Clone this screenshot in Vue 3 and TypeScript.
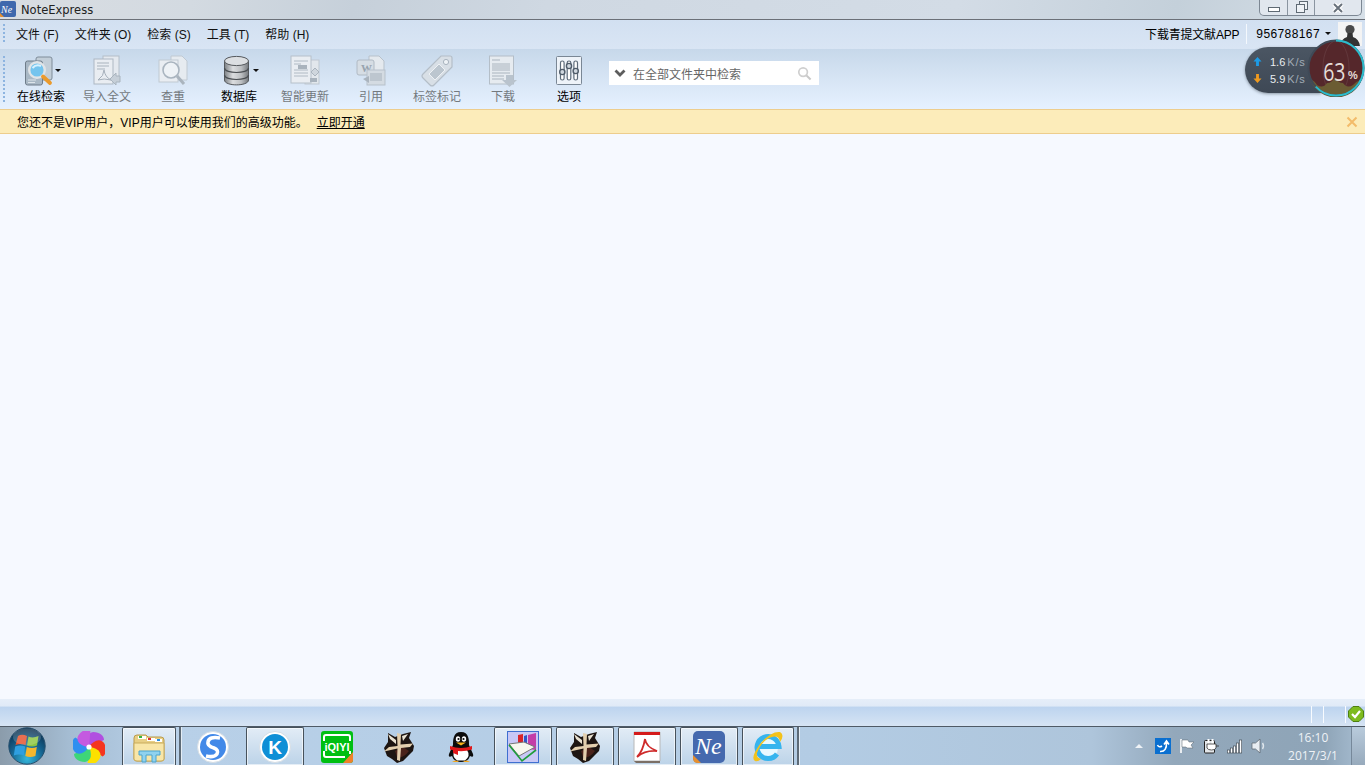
<script setup lang="ts">
const menus = ["文件 (F)", "文件夹 (O)", "检索 (S)", "工具 (T)", "帮助 (H)"]

const tools = [
  { id: "search", label: "在线检索", on: true, caret: true },
  { id: "import", label: "导入全文", on: false, caret: false },
  { id: "dup", label: "查重", on: false, caret: false },
  { id: "db", label: "数据库", on: true, caret: true },
  { id: "update", label: "智能更新", on: false, caret: false },
  { id: "cite", label: "引用", on: false, caret: false },
  { id: "tag", label: "标签标记", on: false, caret: false },
  { id: "down", label: "下载", on: false, caret: false },
  { id: "opts", label: "选项", on: true, caret: false },
]

const tasks = [
  { id: "sogou", active: false },
  { id: "k", active: true },
  { id: "iqiyi", active: false },
  { id: "game", active: false },
  { id: "qq", active: false },
  { id: "book", active: true },
  { id: "game", active: true },
  { id: "pdf", active: true },
  { id: "ne", active: true },
  { id: "ie", active: true },
]

const petals = ["#b14fe0", "#f5351f", "#fde000", "#3ed678", "#2f8ff0", "#c45ae0"]
</script>

<template>
  <div class="app">
    <header class="titlebar">
      <svg class="app-logo" viewBox="0 0 16 16" width="16" height="16">
        <rect width="16" height="16" rx="2" fill="#3f68ad" />
        <path d="M0 12 L4 16 H1 Q0 16 0 15Z" fill="#e8902e" />
        <text x="1" y="12" class="ne-small">Ne</text>
      </svg>
      <span class="app-name">NoteExpress</span>
      <div class="win-btns">
        <span class="win-btn min"><i></i></span>
        <span class="win-btn restore"><b></b><i></i></span>
        <span class="win-btn close">
          <svg viewBox="0 0 14 10" width="14" height="10">
            <path d="M3 1 L11 9 M11 1 L3 9" stroke="#fff" stroke-width="4.4" />
            <path d="M3 1 L11 9 M11 1 L3 9" stroke="#68717b" stroke-width="2" />
          </svg>
        </span>
      </div>
    </header>

    <nav class="menubar">
      <span class="grip"></span>
      <span v-for="m in menus" :key="m" class="menu">{{ m }}</span>
      <div class="account">
        <span class="app-link">下载青提文献APP</span>
        <span class="acc-sep"></span>
        <span class="acc-id">956788167</span>
        <span class="caret small"></span>
        <svg class="avatar" viewBox="0 0 24 24" width="24" height="24">
          <rect width="24" height="24" fill="#f4f4f4" />
          <circle cx="12" cy="7.5" r="4.6" fill="#4a4a4a" />
          <path d="M9.5 11 L14.5 11 L15 15 Q21 17 22 24 H2 Q3 17 9 15Z" fill="#333" />
        </svg>
      </div>
    </nav>

    <section class="toolbar">
      <span class="grip tall"></span>
      <div v-for="t in tools" :key="t.id" class="tool" :class="{ off: !t.on }">
        <div class="tool-icon">
          <svg v-if="t.id === 'search'" viewBox="0 0 32 32" width="32" height="32">
            <rect x="11" y="2" width="16" height="23" rx="2" fill="#c2ced8" stroke="#7e8c99" />
            <rect x="0.5" y="6" width="17" height="24" rx="2" fill="#a9b8c5" stroke="#6f7d8a" />
            <path d="M3 25 H11 M3 27.5 H10" stroke="#dde4ea" />
            <circle cx="12" cy="15" r="7.800" fill="#74c4ee" stroke="#e0e4e7" stroke-width="2.400" />
            <path d="M7.500 13 Q11 9 16 11" stroke="#d6f1ff" stroke-width="2" fill="none" />
            <path d="M18 21.500 L25 28" stroke="#ea9a2c" stroke-width="3.800" stroke-linecap="round" />
          </svg>
          <svg v-else-if="t.id === 'import'" viewBox="0 0 32 32" width="32" height="32">
            <rect x="12" y="1" width="16" height="22" fill="#e4e9ef" stroke="#b4bec8" />
            <rect x="3" y="4" width="19" height="25" fill="#e9edf2" stroke="#adb8c3" />
            <path d="M6 8 H18 M6 11 H18 M6 14 H14" stroke="#a9b3bd" />
            <path d="M7 25 Q13 21 13 15 Q14 22 20 25 Q13 23 7 25Z" fill="none" stroke="#a5afba" />
            <path d="M19 24 L25 18 V21 H29 V27 H25 V30Z" fill="#c6cfd8" stroke="#a9b4be" />
          </svg>
          <svg v-else-if="t.id === 'dup'" viewBox="0 0 32 32" width="32" height="32">
            <path d="M14 1 H25 L30 6 V25 H14Z" fill="#e6ebf0" stroke="#c0c9d2" />
            <rect x="2" y="5" width="19" height="22" fill="#e9edf2" stroke="#c0c9d2" />
            <circle cx="14" cy="15" r="8" fill="#eef2f6" stroke="#a9b4bf" stroke-width="1.600" />
            <path d="M20 21 L27 29" stroke="#aab4be" stroke-width="3" />
          </svg>
          <svg v-else-if="t.id === 'db'" viewBox="0 0 32 32" width="32" height="32">
            <defs>
              <linearGradient id="dbg" x1="0" x2="1" y1="0" y2="0">
                <stop offset="0" stop-color="#7d8185" />
                <stop offset=".35" stop-color="#dcdee0" />
                <stop offset=".7" stop-color="#bcbfc2" />
                <stop offset="1" stop-color="#74787c" />
              </linearGradient>
            </defs>
            <path d="M1.500 6 V25 C1.500 31.500 25.500 31.500 25.500 25 V6Z" fill="url(#dbg)" stroke="#55595d" />
            <ellipse cx="13.500" cy="6" rx="12" ry="4.600" fill="#dcdfe2" stroke="#55595d" />
            <path d="M1.500 13 C1.500 19 25.500 19 25.500 13 M1.500 20 C1.500 26 25.500 26 25.500 20" fill="none" stroke="#4a4e52" stroke-width="1.200" />
          </svg>
          <svg v-else-if="t.id === 'update'" viewBox="0 0 32 32" width="32" height="32">
            <rect x="16" y="5" width="14" height="24" fill="#e2e7ec" stroke="#bfc8d1" />
            <rect x="2" y="1" width="20" height="27" fill="#e9edf2" stroke="#b6c0ca" />
            <path d="M5 6 H19 M5 9 H12 M5 15 H19 M5 18 H19 M5 21 H19" stroke="#b0bac4" />
            <rect x="9" y="10" width="9" height="4" fill="#a9b3bd" />
            <rect x="21" y="23" width="7" height="4" fill="#a9b3bd" />
            <path d="M26 13 L30 17 L26 21 L22 17Z" fill="#cfd6dd" stroke="#aab4be" />
          </svg>
          <svg v-else-if="t.id === 'cite'" viewBox="0 0 32 32" width="32" height="32">
            <path d="M14 1 H24 L29 6 V20 H14Z" fill="#e4e9ee" stroke="#b7c1cb" />
            <rect x="2" y="5" width="17" height="15" rx="2" fill="#d6dde4" stroke="#b0bac4" />
            <text x="6" y="17" class="w-letter">W</text>
            <rect x="12" y="15" width="18" height="15" fill="#d4dbe2" stroke="#b7c1cb" />
            <rect x="15" y="18" width="12" height="8" fill="#bdc6cf" />
            <path d="M14 21 L8 24 L14 28Z" fill="#aab4be" />
          </svg>
          <svg v-else-if="t.id === 'tag'" viewBox="0 0 32 32" width="32" height="32">
            <path d="M20 1 H29 Q31 1 31 3 V12 L13 30 Q11 32 9 30 L2 23 Q0 21 2 19Z" fill="#d8dfe6" stroke="#b4bec8" stroke-width="1.200" />
            <circle cx="25" cy="7" r="2.600" fill="#eef2f6" stroke="#a9b4bf" />
            <path d="M18 9 L24 15 L14 25 L8 19Z" fill="#bcc6cf" stroke="#eef1f4" />
          </svg>
          <svg v-else-if="t.id === 'down'" viewBox="0 0 32 32" width="32" height="32">
            <rect x="2.500" y="1" width="24" height="28" fill="#e6ebf0" stroke="#b4bec8" />
            <path d="M5 5 H13 M5 9 H23 M5 11 H23 M5 13 H23 M5 15 H23 M5 18 H23 M5 21 H17 M5 24 H17" stroke="#aab4be" />
            <path d="M19 20 H26 V25 H30 L22.500 32 L15 25 H19Z" fill="#b9c3cd" />
          </svg>
          <svg v-else viewBox="0 0 32 32" width="32" height="32">
            <rect x="3.500" y="1.500" width="25" height="28" rx="1" fill="#eef3f9" stroke="#7a8795" />
            <g fill="#fff" stroke="#5d6b7a" stroke-width="1.200">
              <rect x="7.500" y="6" width="3.600" height="19" rx="1.800" />
              <rect x="14.200" y="6" width="3.600" height="19" rx="1.800" />
              <rect x="20.900" y="6" width="3.600" height="19" rx="1.800" />
            </g>
            <g fill="#cfd7df" stroke="#4f5c6a" stroke-width="1.400">
              <circle cx="9.300" cy="17" r="2.600" />
              <circle cx="16" cy="11" r="2.600" />
              <circle cx="22.700" cy="16" r="2.600" />
            </g>
          </svg>
          <span v-if="t.caret" class="caret"></span>
        </div>
        <span class="tool-label">{{ t.label }}</span>
      </div>

      <div class="searchbox">
        <svg viewBox="0 0 12 8" width="12" height="8">
          <path d="M1.500 1.500 L6 6 L10.500 1.500" fill="none" stroke="#5d5d5d" stroke-width="2.800" />
        </svg>
        <span class="search-text">在全部文件夹中检索</span>
        <svg class="search-glass" viewBox="0 0 16 16" width="15" height="15">
          <circle cx="6.500" cy="6.500" r="4.600" fill="none" stroke="#cfcfcf" stroke-width="1.800" />
          <path d="M10 10 L14.500 14.500" stroke="#c8c8c8" stroke-width="2.200" />
        </svg>
      </div>

      <div class="speed">
        <div class="speed-rows">
          <div class="speed-row">
            <svg viewBox="0 0 10 10" width="9" height="9"><path d="M5 0 L9.500 5 H6.600 V10 H3.400 V5 H.5Z" fill="#1d9be6" /></svg>
            <span class="val">1.6</span><span class="unit">K/s</span>
          </div>
          <div class="speed-row">
            <svg viewBox="0 0 10 10" width="9" height="9"><path d="M5 10 L9.500 5 H6.600 V0 H3.400 V5 H.5Z" fill="#ef9a1f" /></svg>
            <span class="val">5.9</span><span class="unit">K/s</span>
          </div>
        </div>
        <div class="gauge">
          <svg class="gauge-bg" viewBox="0 0 58 58" width="58" height="58">
            <circle cx="29" cy="29" r="27.500" fill="#55272b" />
            <ellipse cx="29" cy="29" rx="13" ry="27" fill="none" stroke="#fff" stroke-opacity=".08" />
            <path d="M3 40 Q8 42 10 46 Q16 50 20 44 Q25 44 28 38 Q31 44 36 44 Q40 50 46 46 Q50 42 55 40 A27.500 27.500 0 0 1 3 40Z" fill="#6b5c33" />
            <circle cx="29" cy="29" r="27.500" fill="none" stroke="#3f4a57" stroke-width="2" />
            <circle cx="29" cy="29" r="27.500" fill="none" stroke="#2cbccc" stroke-width="2" stroke-dasharray="109 173" transform="rotate(-90 29 29)" />
          </svg>
          <span class="gauge-num">63</span>
          <span class="gauge-pct">%</span>
        </div>
      </div>
    </section>

    <div class="notice">
      <span>您还不是VIP用户，VIP用户可以使用我们的高级功能。</span>
      <a class="notice-link">立即开通</a>
      <svg class="notice-close" viewBox="0 0 12 12" width="12" height="12">
        <path d="M1.500 1.500 L10.500 10.500 M10.500 1.500 L1.500 10.500" stroke="#f3bb6a" stroke-width="2" />
      </svg>
    </div>

    <main class="content"></main>

    <div class="statusbar">
      <span class="st-sep first"></span>
      <span class="st-sep mid"></span>
      <span class="st-sep last"></span>
      <svg viewBox="0 0 16 16" width="16" height="16">
        <path d="M5 .5 H11 L15.500 5 V11 L11 15.500 H5 L.5 11 V5Z" fill="#7dbb1f" stroke="#4e7f10" />
        <path d="M4 8 L7 11 L12 5" fill="none" stroke="#fff" stroke-width="2.200" />
      </svg>
    </div>

    <footer class="taskbar">
      <div class="start">
        <svg viewBox="0 0 38 38" width="38" height="38">
          <defs>
            <radialGradient id="orb" cx=".5" cy=".85" r=".85">
              <stop offset="0" stop-color="#35b7dc" />
              <stop offset=".55" stop-color="#14608c" />
              <stop offset="1" stop-color="#0c2c48" />
            </radialGradient>
          </defs>
          <circle cx="19" cy="19" r="18.200" fill="url(#orb)" stroke="#27506e" />
          <path d="M10 9 Q14 6.500 19 9 L17.500 18 Q13 16 7.500 18Z" fill="#e5502a" />
          <path d="M20.500 9.500 Q25 11.500 30.500 9 L29 18.500 Q24 20.500 19 18.500Z" fill="#8cc63f" />
          <path d="M7.200 19.500 Q12.500 17.500 17.200 19.500 L15.800 28.500 Q11 26.500 5.800 28.500Z" fill="#2f9fe0" />
          <path d="M18.800 20 Q24 22 28.800 20 L27.400 29 Q22 31 17.300 29Z" fill="#f6b62c" />
          <ellipse cx="19" cy="10" rx="14" ry="8.500" fill="#fff" fill-opacity=".18" />
        </svg>
      </div>
      <div class="task first-pin">
        <svg viewBox="0 0 32 32" width="32" height="32">
          <path
            v-for="(c, i) in petals"
            :key="c"
            d="M16 16 C13 10 13 2 20 1 C27 1 31 5 31 9 Z"
            :fill="c"
            :transform="`rotate(${i * 60} 16 16)`"
          />
          <circle cx="16" cy="16" r="2.600" fill="#fff" />
        </svg>
      </div>
      <div class="task narrow active">
        <svg viewBox="0 0 32 32" width="32" height="32">
          <path d="M1 7 Q1 4 4 4 H13 L15 6 H28 Q31 6 31 9 V28 Q31 30 28 30 H4 Q1 30 1 28Z" fill="#e8cf85" stroke="#b99b4e" />
          <rect x="5" y="5" width="8" height="3" fill="#fff" />
          <rect x="6" y="5" width="3" height="2" fill="#34b33f" />
          <rect x="14" y="7" width="8" height="3" fill="#fff" />
          <rect x="15" y="7" width="3" height="2" fill="#d33" />
          <rect x="22" y="8" width="7" height="3" fill="#fff" />
          <rect x="24" y="8" width="3" height="2" fill="#2a8fe0" />
          <path d="M1 12 H31 V28 Q31 30 28 30 H4 Q1 30 1 28Z" fill="#f8e6a8" stroke="#c8ab5c" />
          <path d="M6 20 H27 V24 H23 V31 H19 V24 H13 V31 H9 V24 H6Z" fill="#8fd2ee" stroke="#4aa3cc" />
        </svg>
      </div>
      <span class="task-sep"></span>
      <div v-for="(t, i) in tasks" :key="i" class="task" :class="[{ active: t.active }, t.id]">
        <svg v-if="t.id === 'sogou'" viewBox="0 0 32 32" width="32" height="32">
          <circle cx="16" cy="16" r="15.500" fill="#fff" stroke="#d5dde4" />
          <circle cx="16" cy="16" r="13" fill="#4289e8" />
          <path d="M23 7 Q12 5 11 11 Q10 15 17 17 Q22 19 20 23 Q17 27 9 25" fill="none" stroke="#fff" stroke-width="3.600" />
        </svg>
        <svg v-else-if="t.id === 'k'" viewBox="0 0 32 32" width="32" height="32">
          <circle cx="16" cy="16" r="15.500" fill="#fff" stroke="#d5dde4" />
          <circle cx="16" cy="16" r="13" fill="#0f8fd6" />
          <text x="16" y="22.500" text-anchor="middle" class="k-letter">K</text>
        </svg>
        <svg v-else-if="t.id === 'iqiyi'" viewBox="0 0 32 32" width="32" height="32">
          <rect width="32" height="32" rx="3" fill="#00bf12" />
          <path d="M32 21 V29 Q32 32 29 32 H22Z" fill="#f0812a" />
          <path d="M3 10 V6 Q3 4 5 4 H27 Q29 4 29 6 V10 M3 20 V24 Q3 26 5 26 H24 M29 20 V23" fill="none" stroke="#fff" stroke-width="2" />
          <text x="16" y="20" text-anchor="middle" class="iq-letter">iQIYI</text>
        </svg>
        <svg v-else-if="t.id === 'game'" viewBox="0 0 32 32" width="32" height="32">
          <path d="M5 2 L12 6 L20 3 L28 1 L26 7 L31 15 L30 20 L26 24 L20 30 L14 32 L9 28 L4 25 L1 17 L5 11Z" fill="#1d1512" />
          <path d="M14 26 Q20 28 26 20 L20 16 L12 20Z" fill="#4a231b" />
          <path d="M14 2 L18 3 L17.500 13.500 L30 12.500 L27 16 L18 17 L17 30 L14 29 L14.500 17.500 L1 20.500 L6 16 L14.500 15Z" fill="#e3cfae" />
          <path d="M5 3 L13 9 L13 13 L7 8Z M19 5 L25 3 L20 10Z" fill="#e9e2d2" />
        </svg>
        <svg v-else-if="t.id === 'qq'" viewBox="0 0 32 32" width="32" height="32">
          <path d="M16 1 C8 1 8 9 8 14 L4 23 Q3 27 7 25 Q9 31 16 31 Q23 31 25 25 Q29 27 28 23 L24 14 C24 9 24 1 16 1Z" fill="#0c0c0c" />
          <path d="M10 19 Q16 16 22 19 Q26 25 20 29.500 H12 Q6 25 10 19Z" fill="#fff" />
          <ellipse cx="13" cy="8" rx="2.200" ry="2.800" fill="#fff" />
          <ellipse cx="19" cy="8" rx="2.200" ry="2.800" fill="#fff" />
          <circle cx="13.500" cy="8" r="1.100" fill="#111" />
          <circle cx="18.500" cy="8" r="1.100" fill="#111" />
          <path d="M11 11.500 H21 L16 14.500Z" fill="#f6b21b" />
          <path d="M5 15 Q16 19 27 15 V18.500 Q16 22 5 18.500Z" fill="#e0181b" />
          <path d="M8 18 H13 V24 L8 22Z" fill="#e0181b" />
          <path d="M7 31 Q11 28 14 31Z M18 31 Q21 28 25 31Z" fill="#f6a81b" />
        </svg>
        <svg v-else-if="t.id === 'book'" viewBox="0 0 32 32" width="32" height="32">
          <rect x=".5" y=".5" width="31" height="31" fill="#c8c8f6" stroke="#3f6fd0" />
          <path d="M11 4 L16 3 V16 H11Z" fill="#d8242a" />
          <path d="M17 5 L20 4 V16 H17Z" fill="#2f55c8" />
          <path d="M21 4 L29 2 V19 L21 18Z" fill="#c33ea8" />
          <path d="M2 13 L12 25 L28 16 L17 11Z" fill="#f7f7ee" stroke="#777" />
          <path d="M2 14 L15 30 L29 19" fill="none" stroke="#1e9c3a" stroke-width="1.600" />
        </svg>
        <svg v-else-if="t.id === 'pdf'" viewBox="0 0 32 32" width="32" height="32">
          <path d="M3 1 H29 V30 H3Z" fill="#fff" stroke="#b8b8b8" />
          <rect x="3" y="1" width="26" height="3" fill="#d41a1a" />
          <path d="M6 26 Q12 20 14 8 Q15 16 26 20 Q14 19 6 26Z" fill="none" stroke="#cf2b2b" stroke-width="1.800" />
          <path d="M3 30 H29 V32 H5Z" fill="#7b6f66" />
        </svg>
        <svg v-else-if="t.id === 'ne'" viewBox="0 0 32 32" width="32" height="32">
          <rect width="32" height="32" rx="5" fill="#4569ae" />
          <path d="M0 24 L8 32 H5 Q0 32 0 27Z" fill="#e8902e" />
          <text x="2" y="23" class="ne-big">Ne</text>
        </svg>
        <svg v-else viewBox="0 0 32 32" width="32" height="32">
          <circle cx="16" cy="17" r="10" fill="#e8f8ff" />
          <path d="M25 23 A11 11 0 1 1 27 15.500 H7" fill="none" stroke="#36b4ee" stroke-width="5" />
          <path d="M3 30 Q-2 27 8 13 Q19 0 28 1 Q33 4 28 11 Q27 4 20 6 Q10 9 5 22 Q4 27 9 28 Q6 31 3 30Z" fill="#f3c21b" />
        </svg>
      </div>
      <span class="task-sep"></span>

      <div class="tray">
        <span class="tray-arrow"></span>
        <svg viewBox="0 0 16 16" width="16" height="16">
          <rect width="16" height="16" fill="#0a6fd0" />
          <path d="M2.500 7 Q4 10 7 8 M5 13.500 Q12 14 11.500 4 M9 6.500 L11.500 3 L14 6.500" fill="none" stroke="#fff" stroke-width="1.600" />
        </svg>
        <svg viewBox="0 0 16 16" width="16" height="16">
          <path d="M2 1 V15" stroke="#fff" stroke-width="1.600" />
          <path d="M3 2 H9 L10 4 H15 L12 7 L14 10 H8 L7 9 H3Z" fill="#fff" stroke="#55606a" stroke-width=".5" />
        </svg>
        <svg viewBox="0 0 16 16" width="16" height="16">
          <rect x="1.500" y="2.500" width="10" height="12.500" rx="1" fill="#e3e6e9" stroke="#222" />
          <path d="M5.500 6 V1 M9.500 6 V1" stroke="#fff" stroke-width="2" />
          <path d="M4 6 H13 V10 Q12 12 8.500 12 Q5 12 4 10Z M13 8 H16" fill="#fff" stroke="#333" stroke-width=".8" />
        </svg>
        <svg viewBox="0 0 16 16" width="16" height="16">
          <g fill="#fff" stroke="#3b444c" stroke-width=".6">
            <rect x=".5" y="12" width="2.200" height="3" />
            <rect x="3.500" y="10" width="2.200" height="5" />
            <rect x="6.500" y="8" width="2.200" height="7" />
            <rect x="9.500" y="5" width="2.200" height="10" />
            <rect x="12.500" y="2" width="2.200" height="13" />
          </g>
        </svg>
        <svg viewBox="0 0 16 16" width="16" height="16">
          <path d="M1 5 H4.500 L9 1 V15 L4.500 11 H1Z" fill="#e8edf2" stroke="#59636c" stroke-width=".7" />
          <path d="M11.500 5 Q13.500 8 11.500 11" fill="none" stroke="#dfe6ec" stroke-width="1.400" />
        </svg>
      </div>
      <div class="clock">
        <span>16:10</span>
        <span>2017/3/1</span>
      </div>
      <div class="show-desktop"></div>
    </footer>
  </div>
</template>

<style scoped>
.app {
  height: 765px;
  width: 1365px;
  display: flex;
  flex-direction: column;
  overflow: hidden;
  font-family: "Liberation Sans", "Noto Sans CJK SC", sans-serif;
  font-size: 12px;
  color: #000;
  background: #f6f9ff;
}

.titlebar {
  height: 20px;
  flex: none;
  box-sizing: border-box;
  display: flex;
  align-items: center;
  border-bottom: 1px solid #6b7078;
  background: linear-gradient(105deg, #d9dde2 0, #d3dae1 14%, #c6d0da 26%, #cfd8e2 40%, #d3dce6 70%, #c4d0da 86%, #d7e0e8 100%);
}

.app-logo {
  margin-bottom: 1px;
}

.ne-small {
  font: italic 10px "Liberation Serif", serif;
  fill: #fff;
}

.app-name {
  margin-left: 5px;
  font-family: "DejaVu Sans", sans-serif;
  font-size: 11.5px;
  color: #222;
}

.win-btns {
  margin-left: auto;
  margin-right: 3px;
  align-self: flex-start;
  height: 15px;
  display: flex;
  border: 1px solid #7c8793;
  border-top: none;
  border-radius: 0 0 5px 5px;
  background: #e1e7ee;
}

.win-btn {
  position: relative;
  display: flex;
  align-items: center;
  justify-content: center;
  width: 26px;
  border-left: 1px solid #8a95a0;
}

.win-btn.min {
  border-left: none;
  width: 27px;
}

.win-btn.close {
  width: 46px;
}

.win-btn.min i {
  width: 10px;
  height: 3px;
  margin-top: 4px;
  background: #fff;
  border: 1px solid #5f6a74;
}

.win-btn.restore i,
.win-btn.restore b {
  position: absolute;
  width: 7px;
  height: 7px;
  border: 1.5px solid #5f6a74;
  background: #eef2f6;
}

.win-btn.restore b {
  left: 11px;
  top: 1px;
}

.win-btn.restore i {
  left: 8px;
  top: 4px;
}

.menubar {
  height: 29px;
  flex: none;
  box-sizing: border-box;
  display: flex;
  align-items: center;
  padding: 0 0 2px 3px;
  background: linear-gradient(#d2e0f1, #d9e5f4);
}

.grip {
  width: 2px;
  height: 19px;
  margin-right: 11px;
  background: repeating-linear-gradient(#8db4e0 0 2px, transparent 2px 4px);
}

.grip.tall {
  height: 46px;
  align-self: center;
  margin-right: 3px;
}

.menu {
  margin-right: 16px;
  color: #111;
}

.account {
  margin-left: auto;
  display: flex;
  align-items: center;
  padding-right: 3px;
}

.app-link {
  letter-spacing: -0.2px;
}

.acc-sep {
  width: 1px;
  height: 20px;
  margin: 0 9px 0 7px;
  background: #f4f8fd;
}

.acc-id {
  letter-spacing: 0.4px;
}

.avatar {
  margin-left: 7px;
}

.caret {
  width: 0;
  height: 0;
  border: 3px solid transparent;
  border-top: 3px solid #111;
  border-bottom: none;
}

.caret.small {
  margin-left: 5px;
}

.toolbar {
  position: relative;
  height: 60px;
  flex: none;
  box-sizing: border-box;
  display: flex;
  align-items: flex-start;
  padding-left: 3px;
  background: linear-gradient(#c7d8ea, #e6f1ff);
}

.tool {
  width: 66px;
  flex: none;
  display: flex;
  flex-direction: column;
  align-items: center;
}

.tool-icon {
  position: relative;
  width: 32px;
  height: 32px;
  margin-top: 6px;
}

.tool-icon .caret {
  position: absolute;
  left: 30px;
  top: 14px;
}

.tool-label {
  margin-top: 1px;
  line-height: 18px;
}

.tool.off .tool-label {
  color: #74797e;
}

.searchbox {
  width: 210px;
  height: 24px;
  margin: 12px 0 0 7px;
  padding: 0 7px 0 5px;
  box-sizing: border-box;
  display: flex;
  align-items: center;
  background: #fff;
}

.search-text {
  margin-left: 7px;
  color: #666;
}

.search-glass {
  margin-left: auto;
}

.speed {
  position: absolute;
  left: 1245px;
  top: -2px;
  width: 120px;
  height: 46px;
}

.speed-rows {
  position: absolute;
  left: 0;
  top: 0;
  width: 76px;
  height: 46px;
  border-radius: 23px 0 0 23px;
  background: linear-gradient(#4b5663, #3e4855);
  box-shadow: 0 1px 3px rgba(40, 50, 60, 0.45);
  display: flex;
  flex-direction: column;
  justify-content: center;
  gap: 1px;
}

.speed-row {
  display: flex;
  align-items: center;
  padding-left: 8px;
  height: 16px;
  font-size: 11px;
}

.val {
  margin-left: 8px;
  color: #e9edf1;
}

.unit {
  margin-left: 2px;
  color: #a3adb7;
  letter-spacing: 0.8px;
}

.gauge {
  position: absolute;
  left: 62px;
  top: -8px;
  width: 58px;
  height: 58px;
}

.gauge-bg {
  position: absolute;
  left: 0;
  top: 0;
}

.gauge-num {
  position: absolute;
  left: 13px;
  top: 17px;
  font-size: 25px;
  line-height: 30px;
  font-family: "Open Sans", sans-serif;
  transform: scaleX(0.78);
  color: #e4ddd8;
}

.gauge-pct {
  position: absolute;
  left: 41px;
  top: 30px;
  font-size: 11px;
  line-height: 12px;
  font-weight: 700;
  color: #e4ddd8;
}

.notice {
  position: relative;
  height: 25px;
  flex: none;
  box-sizing: border-box;
  display: flex;
  align-items: center;
  padding-left: 17px;
  border-top: 1px solid #edcd8d;
  border-bottom: 1px solid #edcd8d;
  background: #fcecba;
}

.notice-link {
  margin-left: 9px;
  text-decoration: underline;
}

.notice-close {
  margin-left: auto;
  margin-right: 7px;
}

.content {
  flex: 1;
  background: #f6f9ff;
}

.statusbar {
  height: 27px;
  flex: none;
  box-sizing: border-box;
  display: flex;
  align-items: center;
  justify-content: flex-end;
  padding: 3px 1px 0 0;
  background: linear-gradient(#e6eef9 0, #e0eaf7 26%, #bdd4ef 30%, #d6e4f4 100%);
}

.st-sep {
  width: 1px;
  height: 17px;
  background: #f8fbff;
}

.st-sep.first {
  margin-right: 11px;
}

.st-sep.mid {
  margin-right: 21px;
}

.st-sep.last {
  margin-right: 2px;
}

.taskbar {
  height: 39px;
  flex: none;
  box-sizing: border-box;
  display: flex;
  border-top: 1px solid #4f5a66;
  background: linear-gradient(90deg, #8b9cab 0, #a4bcd2 5%, #b8d0e8 12%, #b3cce4 60%, #aec5db 80%, #93a8bb 86%, #8ea4b7 97%, #a9bfd3 100%);
}

.start {
  width: 58px;
  flex: none;
  display: flex;
  align-items: center;
  padding-left: 8px;
  box-sizing: border-box;
}

.task {
  width: 62px;
  flex: none;
  display: flex;
  align-items: center;
  justify-content: center;
  box-sizing: border-box;
  border: 1px solid transparent;
  border-bottom: none;
}

.task.narrow {
  width: 58px;
}

.task.active {
  width: 58px;
  margin: 0 2px;
  border-color: #47525c;
  border-radius: 2px 2px 0 0;
  background: linear-gradient(#e2ecf6, #bcd3e8);
  box-shadow: inset 0 0 0 1px rgba(255, 255, 255, 0.6);
}

.task.narrow.active {
  width: 54px;
}

.task.ie.active {
  width: 52px;
}

.task-sep {
  width: 2px;
  margin: 0 1px;
  background: #5d6a76;
  box-shadow: 1px 0 0 #e4edf5;
}

.tray {
  margin-left: auto;
  display: flex;
  align-items: center;
  gap: 8px;
  padding-right: 8px;
}

.tray-arrow {
  width: 0;
  height: 0;
  border: 4px solid transparent;
  border-bottom: 4px solid #eef2f6;
  border-top: none;
  margin-right: 4px;
}

.clock {
  width: 76px;
  box-sizing: border-box;
  padding-top: 2px;
  display: flex;
  flex-direction: column;
  align-items: center;
  justify-content: center;
  gap: 2px;
  color: #eef2f6;
  font-family: "Open Sans", sans-serif;
  font-size: 12px;
  line-height: 16px;
}

.show-desktop {
  width: 13px;
  flex: none;
  border-left: 1px solid #76889a;
  background: linear-gradient(#b9cbdc, #97aabc);
}

.k-letter {
  font: bold 19px "Liberation Sans", sans-serif;
  fill: #fff;
}

.iq-letter {
  font: bold 11px "Liberation Sans", sans-serif;
  fill: #fff;
}

.ne-big {
  font: italic 24px "Liberation Serif", serif;
  fill: #fff;
}

.w-letter {
  font: bold 11px "Liberation Serif", serif;
  fill: #98a3ae;
}
</style>
